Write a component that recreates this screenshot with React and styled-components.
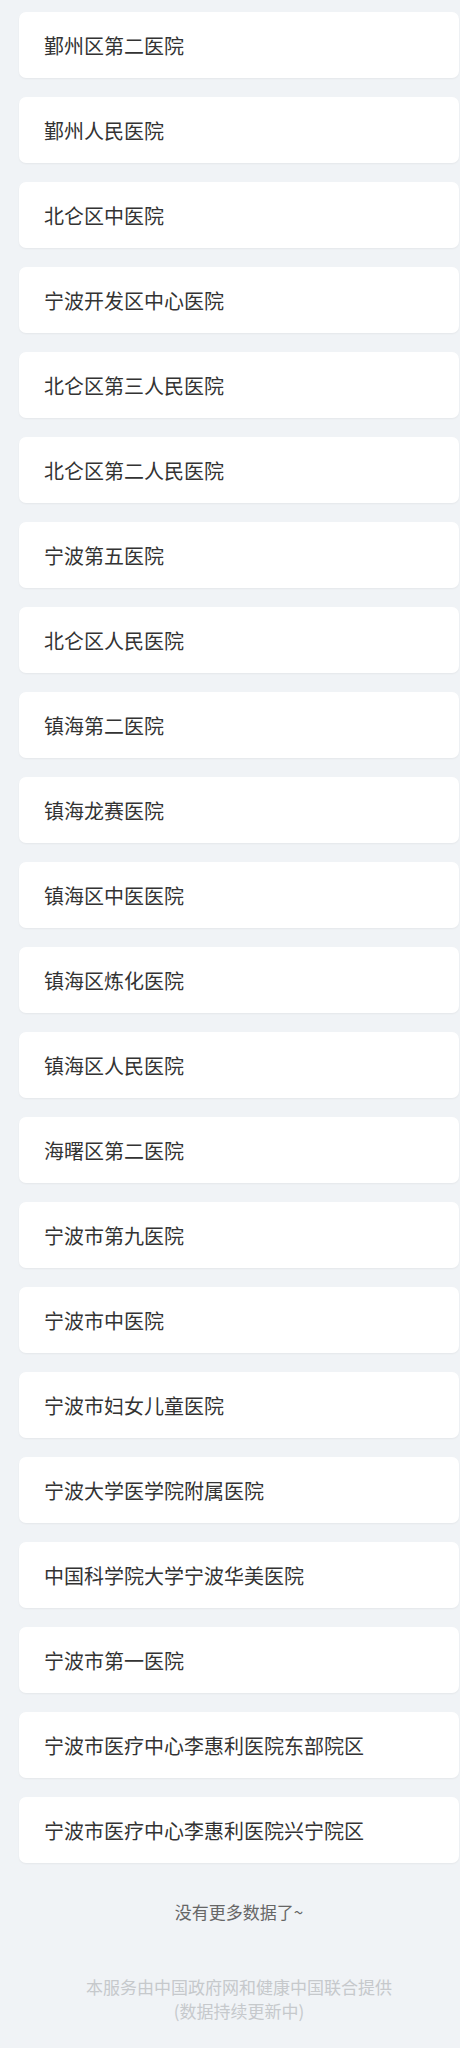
import React from "react";
import styled, { createGlobalStyle } from "styled-components";

const GlobalStyle = createGlobalStyle`
  html, body {
    margin: 0;
    padding: 0;
    background: #f0f3f6;
  }
  body {
    font-family: "Noto Sans CJK SC", "Noto Sans", sans-serif;
  }
`;

const Page = styled.div`
  min-height: 2048px;
  background: #f0f3f6;
  padding: 12px 1px 0 19px;
  box-sizing: border-box;
`;

const List = styled.div`
  display: flex;
  flex-direction: column;
  gap: 19px;
`;

const Card = styled.div`
  display: flex;
  align-items: center;
  height: 66px;
  padding-left: 25px;
  background: #fff;
  border-radius: 7px;
  box-shadow: 0 1px 2px rgba(0, 0, 0, 0.05);
  color: #333;
  font-size: 20px;
  box-sizing: border-box;
`;

const NoMore = styled.div`
  margin-top: 37px;
  text-align: center;
  color: #666;
  font-size: 17px;
  line-height: 24px;
`;

const Footer = styled.div`
  margin-top: 51px;
  text-align: center;
  color: #c6c9cc;
  font-size: 17px;
  line-height: 24px;
`;

const hospitals = [
  "鄞州区第二医院",
  "鄞州人民医院",
  "北仑区中医院",
  "宁波开发区中心医院",
  "北仑区第三人民医院",
  "北仑区第二人民医院",
  "宁波第五医院",
  "北仑区人民医院",
  "镇海第二医院",
  "镇海龙赛医院",
  "镇海区中医医院",
  "镇海区炼化医院",
  "镇海区人民医院",
  "海曙区第二医院",
  "宁波市第九医院",
  "宁波市中医院",
  "宁波市妇女儿童医院",
  "宁波大学医学院附属医院",
  "中国科学院大学宁波华美医院",
  "宁波市第一医院",
  "宁波市医疗中心李惠利医院东部院区",
  "宁波市医疗中心李惠利医院兴宁院区",
];

export default function App() {
  return (
    <Page>
      <GlobalStyle />
      <List>
        {hospitals.map((name) => (
          <Card key={name}>{name}</Card>
        ))}
      </List>
      <NoMore>没有更多数据了~</NoMore>
      <Footer>
        本服务由中国政府网和健康中国联合提供
        <br />
        (数据持续更新中)
      </Footer>
    </Page>
  );
}
